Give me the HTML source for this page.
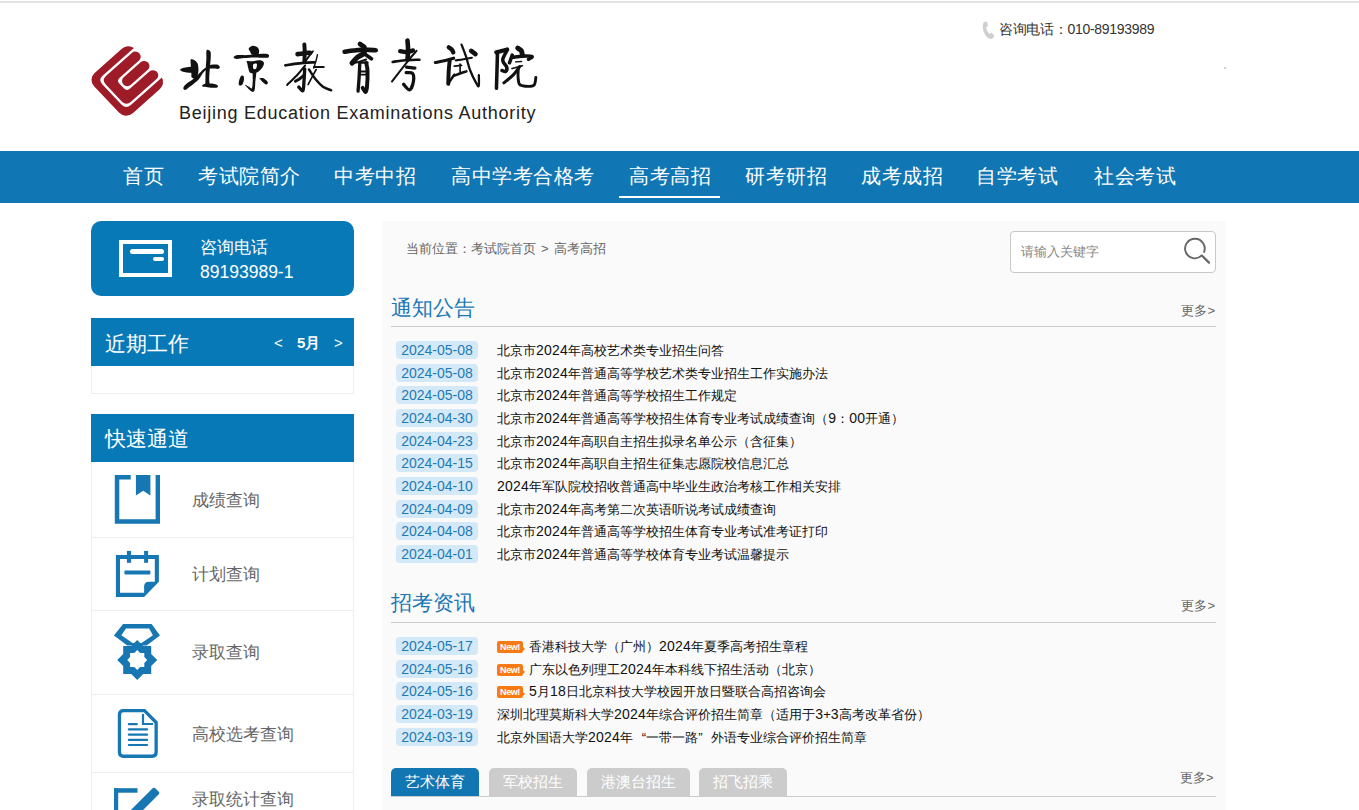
<!DOCTYPE html>
<html><head><meta charset="utf-8">
<style>
*{margin:0;padding:0;box-sizing:border-box}
html,body{width:1359px;height:810px;overflow:hidden;background:#fff}
body{font-family:"Liberation Sans",sans-serif;position:relative;color:#333}
.abs{position:absolute}
#topline{left:0;top:1px;width:1359px;height:2px;background:#e3e3e3}
#logo{left:91px;top:46px;width:72px;height:70px}

#en{left:179px;top:102px;font-size:18px;line-height:22px;color:#222;letter-spacing:0.75px;white-space:nowrap}
#tel{left:982px;top:20px;height:20px;white-space:nowrap}
#tel span{position:absolute;left:17px;top:-1.5px;font-size:14px;line-height:20px;color:#333;letter-spacing:-0.3px}
#dot{left:1224px;top:67px;width:2px;height:2px;background:#cdcdcd}
#nav{left:0;top:151px;width:1359px;height:52px;background:#1177b4}
#nav a{position:absolute;top:-1px;font-size:20px;letter-spacing:0.5px;line-height:52px;color:#fff;text-decoration:none;white-space:nowrap}
#ul{left:619px;top:196px;width:101px;height:2px;background:#fff}
/* left column */
#phone{left:91px;top:221px;width:263px;height:75px;background:#0879b7;border-radius:10px}
#phone .ic{position:absolute;left:28px;top:19px;width:53px;height:37px;border:4px solid #fff}
#phone .b1{position:absolute;left:7px;top:5px;width:34px;height:5px;border-radius:3px;background:#fff}
#phone .b2{position:absolute;left:30px;top:13px;width:11px;height:4px;border-radius:2px;background:#fff}
#phone .t1{position:absolute;left:109px;top:15px;font-size:17px;line-height:24px;color:#fff}
#phone .t2{position:absolute;left:109px;top:39px;font-size:17.5px;line-height:24px;color:#fff}
.lh{position:absolute;left:91px;width:263px;height:48px;background:#0879b7;color:#fff}
.lh .t{position:absolute;left:14px;top:2px;font-size:21px;line-height:48px}
#work{top:318px}
#workbody{left:91px;top:366px;width:263px;height:28px;border:1px solid #eee;border-top:none;background:#fff}
#work .m{position:absolute;top:1px;line-height:48px;font-size:15px;font-weight:bold}
#quick{top:414px}
.qi{position:absolute;left:91px;width:263px;border:1px solid #eee;border-top:none;background:#fff}
.qi .t{position:absolute;left:100px;font-size:17px;color:#666;line-height:24px;white-space:nowrap}
.qi svg{position:absolute}
/* main */
#main{left:382px;top:221px;width:844px;height:589px;background:#fafafa}
#crumb{left:406px;top:240px;font-size:13px;line-height:18px;color:#666;white-space:nowrap}
#search{left:1010px;top:231px;width:206px;height:42px;border:1px solid #c8c8c8;border-radius:4px;background:#fff}
#search span{position:absolute;left:10px;top:11px;font-size:13px;line-height:18px;color:#888}
.sec{position:absolute;left:391px;width:825px;border-bottom:1px solid #ccc}
.sec .h{position:absolute;left:0;margin-top:1px;font-size:21px;line-height:28px;color:#1a78b6;white-space:nowrap}
.sec .more{position:absolute;right:1px;margin-top:1.5px;font-size:13px;line-height:18px;color:#666;white-space:nowrap}
.list{position:absolute;left:396px;width:820px}
.row{position:relative;height:22.67px;white-space:nowrap}
.row .d{position:absolute;left:0;top:2px;width:82px;height:18px;border-radius:4px;background:#d4e9f7;color:#1e7ab5;font-size:14px;line-height:18px;text-align:center}
.row .tt{position:absolute;left:101px;top:0px;font-size:13px;line-height:22px;color:#111}
.n{font-style:normal;font-size:14px;letter-spacing:0.25px}
.ql,.qr{font-style:normal;display:inline-block;width:13px}.ql{text-align:right}
.new{display:inline-block;position:relative;width:26px;height:12px;background:#f77a14;border-radius:2px;color:#fff;font-size:9px;font-weight:bold;line-height:12px;text-align:center;vertical-align:middle;margin-right:6px;margin-top:-1px;top:0;letter-spacing:-0.4px}
.new:after{content:"";position:absolute;right:-2px;top:6px;border-left:2px solid #f77a14;border-top:2px solid transparent;border-bottom:2px solid transparent}
.tab{position:absolute;top:768px;height:28px;border-radius:5px 5px 0 0;background:#ccc;color:#fff;font-size:15px;line-height:28px;padding:0 14px;white-space:nowrap}
#tabline{left:391px;top:796px;width:825px;height:1px;background:#ccc}
</style></head>
<body>
<div id="topline" class="abs"></div>

<svg id="logo" class="abs" viewBox="0 0 72 70" style="overflow:visible">
  <g transform="translate(36.3,35) scale(1.085,1.05) rotate(-42.5)" fill="#9e1b28">
    <path d="M17 -26 A9 9 0 0 1 25.75 -19.1 H-13.1 Q-19.1 -19.1 -19.1 -13.1 V13.1 Q-19.1 19.1 -13.1 19.1 H25.75 A9 9 0 0 1 17 26 H-17 A9 9 0 0 1 -26 17 V-17 A9 9 0 0 1 -17 -26 Z"/>
    <path d="M21.1 -16.9 A4.9 4.9 0 0 1 21.1 -7.1 H-3 Q-7.1 -7.1 -7.1 -3 V3 Q-7.1 7.1 -3 7.1 H21.1 A4.9 4.9 0 0 1 21.1 16.9 H-10.9 Q-16.9 16.9 -16.9 10.9 V-10.9 Q-16.9 -16.9 -10.9 -16.9 Z"/>
    <rect x="-4.9" y="-4.9" width="30.9" height="9.8" rx="4.9"/>
  </g>
</svg>
<svg class="abs" style="left:0;top:0" width="600" height="130" viewBox="0 0 600 130" fill="#111">
<path fill-rule="evenodd" d="M180.10 69.81 C180.21 69.25 181.52 68.52 182.85 68.05 C184.18 67.58 186.56 67.22 188.09 67.00 C189.62 66.78 190.60 66.85 192.02 66.74 C193.43 66.63 195.62 65.89 196.60 66.35 C197.58 66.80 197.91 68.44 197.91 69.49 C197.91 70.53 197.69 72.08 196.60 72.63 C195.51 73.17 193.00 72.79 191.36 72.76 C189.73 72.73 188.31 72.65 186.78 72.43 C185.25 72.21 183.31 71.89 182.20 71.45 C181.09 71.01 180.00 70.38 180.10 69.81 Z"/>
<path fill-rule="evenodd" d="M190.58 60.00 C190.82 59.26 191.36 59.04 192.15 59.15 C192.93 59.26 194.38 59.91 195.29 60.65 C196.19 61.39 197.05 62.34 197.58 63.60 C198.10 64.85 198.32 66.65 198.43 68.18 C198.54 69.71 198.48 71.34 198.23 72.76 C197.98 74.18 197.52 75.70 196.92 76.69 C196.32 77.67 195.51 78.54 194.63 78.65 C193.76 78.76 192.23 78.21 191.69 77.34 C191.14 76.47 191.47 74.94 191.36 73.41 C191.25 71.89 191.14 69.81 191.03 68.18 C190.92 66.54 190.78 64.96 190.71 63.60 C190.63 62.23 190.34 60.74 190.58 60.00 Z"/>
<path fill-rule="evenodd" d="M183.51 87.16 C183.89 86.23 184.71 85.08 186.13 83.88 C187.54 82.68 190.05 81.49 192.02 79.96 C193.98 78.43 196.05 76.47 197.91 74.72 C199.76 72.98 201.72 70.69 203.14 69.49 C204.56 68.29 205.76 67.63 206.41 67.52 C207.07 67.41 207.61 67.96 207.07 68.83 C206.52 69.71 204.45 71.12 203.14 72.76 C201.83 74.40 200.63 76.96 199.21 78.65 C197.80 80.34 196.38 81.43 194.63 82.90 C192.89 84.38 190.22 86.34 188.74 87.48 C187.27 88.63 186.62 89.45 185.80 89.77 C184.98 90.10 184.22 89.88 183.84 89.45 C183.45 89.01 183.13 88.08 183.51 87.16 Z"/>
<path fill-rule="evenodd" d="M207.07 49.85 C207.53 49.47 208.43 49.74 209.03 50.18 C209.63 50.62 210.39 51.00 210.67 52.47 C210.94 53.94 210.81 56.40 210.67 59.02 C210.53 61.63 210.07 64.91 209.82 68.18 C209.57 71.45 209.24 75.92 209.16 78.65 C209.09 81.38 209.93 83.45 209.36 84.54 C208.79 85.63 206.41 86.18 205.76 85.19 C205.10 84.21 205.43 81.49 205.43 78.65 C205.43 75.81 205.60 71.56 205.76 68.18 C205.92 64.80 206.33 60.98 206.41 58.36 C206.50 55.74 206.17 53.89 206.28 52.47 C206.39 51.05 206.61 50.24 207.07 49.85 Z"/>
<path fill-rule="evenodd" d="M209.03 65.56 C209.90 64.96 212.74 64.69 214.27 64.58 C215.79 64.47 217.27 64.47 218.19 64.91 C219.12 65.34 219.83 66.54 219.83 67.20 C219.83 67.85 219.34 68.61 218.19 68.83 C217.05 69.05 214.49 68.61 212.96 68.51 C211.43 68.40 209.69 68.67 209.03 68.18 C208.38 67.69 208.16 66.16 209.03 65.56 Z"/>
<path fill-rule="evenodd" d="M203.14 84.54 C204.01 84.05 205.87 83.67 207.72 83.56 C209.58 83.45 212.63 83.61 214.27 83.88 C215.90 84.16 216.99 84.65 217.54 85.19 C218.08 85.74 218.08 86.72 217.54 87.16 C216.99 87.59 215.90 87.81 214.27 87.81 C212.63 87.81 209.69 87.38 207.72 87.16 C205.76 86.94 203.25 86.94 202.49 86.50 C201.72 86.07 202.27 85.03 203.14 84.54 Z"/>
<path fill-rule="evenodd" d="M248.94 47.89 C249.49 47.24 251.01 46.14 252.21 45.93 C253.41 45.71 255.05 46.04 256.14 46.58 C257.23 47.13 258.32 48.00 258.76 49.20 C259.20 50.40 259.30 52.80 258.76 53.78 C258.21 54.76 256.69 54.98 255.49 55.09 C254.29 55.20 252.43 54.98 251.56 54.43 C250.69 53.89 250.69 52.58 250.25 51.82 C249.82 51.05 249.16 50.51 248.94 49.85 C248.72 49.20 248.40 48.54 248.94 47.89 Z"/>
<path fill-rule="evenodd" d="M233.89 56.73 C234.49 56.18 235.53 55.36 237.82 55.09 C240.11 54.82 244.36 55.25 247.63 55.09 C250.91 54.93 254.40 54.33 257.45 54.11 C260.50 53.89 264.05 53.62 265.96 53.78 C267.87 53.94 268.52 54.49 268.90 55.09 C269.28 55.69 268.96 56.94 268.25 57.38 C267.54 57.82 266.99 57.71 264.65 57.71 C262.30 57.71 257.56 57.33 254.18 57.38 C250.80 57.43 247.20 57.76 244.36 58.03 C241.53 58.31 238.85 58.96 237.16 59.02 C235.47 59.07 234.76 58.74 234.22 58.36 C233.67 57.98 233.29 57.27 233.89 56.73 Z"/>
<path fill-rule="evenodd" d="M246.98 60.98 C247.91 60.60 250.80 61.42 252.87 61.31 C254.94 61.20 257.67 60.27 259.41 60.32 C261.16 60.38 262.63 60.87 263.34 61.63 C264.05 62.40 264.10 63.60 263.67 64.91 C263.23 66.21 261.98 68.18 260.72 69.49 C259.47 70.80 257.89 72.21 256.14 72.76 C254.40 73.30 251.56 73.52 250.25 72.76 C248.94 72.00 248.78 69.71 248.29 68.18 C247.80 66.65 247.52 64.80 247.31 63.60 C247.09 62.40 246.05 61.36 246.98 60.98 Z M253.52 68.83 C254.01 69.49 255.60 69.32 256.14 68.51 C256.69 67.69 257.29 64.58 256.80 63.92 C256.30 63.27 253.74 63.76 253.20 64.58 C252.65 65.40 253.03 68.18 253.52 68.83 Z"/>
<path fill-rule="evenodd" d="M252.87 71.45 C253.44 69.92 255.73 70.47 256.14 72.10 C256.56 73.74 255.60 78.32 255.36 81.27 C255.12 84.21 255.12 88.01 254.70 89.77 C254.29 91.54 253.61 91.76 252.87 91.87 C252.13 91.98 251.23 91.21 250.25 90.43 C249.27 89.64 247.83 88.08 246.98 87.16 C246.13 86.23 244.82 84.92 245.15 84.87 C245.47 84.81 247.82 86.28 248.94 86.83 C250.07 87.38 251.25 89.07 251.89 88.14 C252.52 87.21 252.57 84.05 252.74 81.27 C252.90 78.49 252.30 72.98 252.87 71.45 Z"/>
<path fill-rule="evenodd" d="M241.09 76.03 C241.80 75.27 242.89 75.49 243.38 76.03 C243.87 76.58 244.14 77.99 244.03 79.30 C243.92 80.61 243.33 82.85 242.73 83.88 C242.13 84.92 241.09 85.41 240.43 85.52 C239.78 85.63 239.02 85.36 238.80 84.54 C238.58 83.72 238.74 82.03 239.13 80.61 C239.51 79.19 240.38 76.79 241.09 76.03 Z"/>
<path fill-rule="evenodd" d="M259.41 78.32 C259.74 77.99 261.60 77.72 262.69 77.99 C263.78 78.27 265.09 79.19 265.96 79.96 C266.83 80.72 267.81 81.81 267.92 82.58 C268.03 83.34 267.27 84.43 266.61 84.54 C265.96 84.65 264.98 83.99 263.99 83.23 C263.01 82.47 261.49 80.78 260.72 79.96 C259.96 79.14 259.09 78.65 259.41 78.32 Z"/>
<path fill="none" stroke="#111" stroke-width="3.95" stroke-linecap="round" stroke-linejoin="round" d="M304.36 44.45 C304.41 45.76 304.71 49.46 304.71 52.33 C304.71 55.19 304.41 60.09 304.36 61.64"/>
<path fill="none" stroke="#111" stroke-width="4.57" stroke-linecap="round" stroke-linejoin="round" d="M297.55 54.12 C298.45 54.00 300.83 53.64 302.92 53.40 C305.01 53.16 308.89 52.80 310.09 52.68"/>
<path fill="none" stroke="#111" stroke-width="1.87" stroke-linecap="round" stroke-linejoin="round" d="M312.95 51.25 C312.23 52.15 309.97 54.83 308.65 56.62 C307.34 58.42 305.67 61.10 305.07 62.00"/>
<path fill="none" stroke="#111" stroke-width="2.70" stroke-linecap="round" stroke-linejoin="round" d="M285.37 65.36 C286.86 65.13 291.28 64.35 294.33 63.93 C297.37 63.51 300.30 63.12 303.64 62.86 C306.98 62.59 312.59 62.44 314.38 62.36"/>
<path fill="none" stroke="#111" stroke-width="2.08" stroke-linecap="round" stroke-linejoin="round" d="M305.07 65.58 C303.88 67.01 300.89 70.95 297.91 74.17 C294.92 77.40 288.95 83.13 287.16 84.92"/>
<path fill="none" stroke="#111" stroke-width="2.91" stroke-linecap="round" stroke-linejoin="round" d="M295.40 81.34 C296.18 80.86 298.62 79.49 300.06 78.47 C301.49 77.46 303.34 75.79 304.00 75.25"/>
<path fill="none" stroke="#111" stroke-width="3.32" stroke-linecap="round" stroke-linejoin="round" d="M304.71 68.80 C304.59 70.83 304.30 77.34 304.00 80.98 C303.70 84.62 303.79 89.64 302.92 90.65 C302.05 91.67 299.46 87.67 298.77 87.07"/>
<path fill="none" stroke="#111" stroke-width="1.45" stroke-linecap="round" stroke-linejoin="round" d="M317.39 54.83 C317.13 55.97 316.44 59.43 315.82 61.64 C315.20 63.85 314.03 67.01 313.67 68.09"/>
<path fill="none" stroke="#111" stroke-width="2.08" stroke-linecap="round" stroke-linejoin="round" d="M314.03 67.01 L323.70 67.01"/>
<path fill="none" stroke="#111" stroke-width="1.66" stroke-linecap="round" stroke-linejoin="round" d="M316.17 69.52 C315.40 70.95 312.87 75.61 311.52 78.11 C310.17 80.62 308.65 83.49 308.08 84.56"/>
<path fill="none" stroke="#111" stroke-width="2.49" stroke-linecap="round" stroke-linejoin="round" d="M309.01 69.52 C310.15 71.19 313.49 76.68 315.82 79.55 C318.14 82.41 320.41 84.92 322.98 86.71 C325.55 88.50 329.84 89.70 331.22 90.29"/>
<path fill="none" stroke="#111" stroke-width="4.78" stroke-linecap="round" stroke-linejoin="round" d="M360.00 44.09 L364.30 46.95"/>
<path fill="none" stroke="#111" stroke-width="4.57" stroke-linecap="round" stroke-linejoin="round" d="M344.60 51.75 C346.15 51.55 350.57 50.89 353.91 50.54 C357.25 50.18 361.01 49.64 364.65 49.60 C368.29 49.57 373.91 50.20 375.76 50.32"/>
<path fill="none" stroke="#111" stroke-width="5.19" stroke-linecap="round" stroke-linejoin="round" d="M364.30 53.40 C363.16 54.06 359.52 55.73 357.49 57.34 C355.46 58.95 353.01 62.12 352.12 63.07"/>
<path fill="none" stroke="#111" stroke-width="2.08" stroke-linecap="round" stroke-linejoin="round" d="M352.12 63.43 C353.37 63.13 357.31 62.30 359.64 61.64 C361.97 60.98 365.01 59.85 366.09 59.49"/>
<path fill="none" stroke="#111" stroke-width="3.74" stroke-linecap="round" stroke-linejoin="round" d="M366.44 55.19 L371.46 58.77"/>
<path fill="none" stroke="#111" stroke-width="3.32" stroke-linecap="round" stroke-linejoin="round" d="M359.78 63.43 C359.66 65.88 359.35 73.52 359.07 78.11 C358.78 82.71 358.23 88.86 358.06 91.01"/>
<path fill="none" stroke="#111" stroke-width="3.95" stroke-linecap="round" stroke-linejoin="round" d="M366.23 63.07 C366.44 64.38 367.40 66.89 367.52 70.95 C367.64 75.01 367.28 83.90 366.95 87.43 C366.61 90.95 366.23 92.02 365.51 92.08 C364.80 92.14 363.13 88.50 362.65 87.79"/>
<path fill="none" stroke="#111" stroke-width="2.29" stroke-linecap="round" stroke-linejoin="round" d="M359.78 62.71 L367.52 62.71"/>
<path fill="none" stroke="#111" stroke-width="1.87" stroke-linecap="round" stroke-linejoin="round" d="M360.00 71.52 L366.44 71.52"/>
<path fill="none" stroke="#111" stroke-width="1.87" stroke-linecap="round" stroke-linejoin="round" d="M360.00 74.68 L366.09 74.68"/>
<path fill="none" stroke="#111" stroke-width="4.59" stroke-linecap="round" stroke-linejoin="round" d="M407.49 40.65 C407.59 42.22 408.10 46.86 408.10 50.06 C408.10 53.26 407.59 58.22 407.49 59.85"/>
<path fill="none" stroke="#111" stroke-width="4.37" stroke-linecap="round" stroke-linejoin="round" d="M400.19 51.19 C401.26 51.32 404.46 52.07 406.59 51.94 C408.72 51.82 411.92 50.69 412.99 50.44"/>
<path fill="none" stroke="#111" stroke-width="2.62" stroke-linecap="round" stroke-linejoin="round" d="M392.66 61.96 C394.35 61.71 398.37 60.83 402.83 60.45 C407.28 60.08 416.63 59.82 419.39 59.70"/>
<path fill="none" stroke="#111" stroke-width="1.97" stroke-linecap="round" stroke-linejoin="round" d="M416.53 50.81 C415.25 52.32 412.95 54.73 408.85 59.85 C404.75 64.97 394.73 77.92 391.91 81.54"/>
<path fill="none" stroke="#111" stroke-width="3.28" stroke-linecap="round" stroke-linejoin="round" d="M406.59 67.23 L414.87 68.13"/>
<path fill="none" stroke="#111" stroke-width="3.28" stroke-linecap="round" stroke-linejoin="round" d="M406.21 72.65 C407.28 72.78 411.42 71.90 412.61 73.40 C413.81 74.91 413.87 78.95 413.37 81.69 C412.87 84.42 411.23 89.38 409.60 89.82 C407.97 90.26 404.58 85.24 403.58 84.32"/>
<path fill="none" stroke="#111" stroke-width="4.36" stroke-linecap="round" stroke-linejoin="round" d="M448.77 47.31 C449.28 47.73 451.10 48.98 451.85 49.82 C452.60 50.66 453.04 51.91 453.28 52.33"/>
<path fill="none" stroke="#111" stroke-width="3.12" stroke-linecap="round" stroke-linejoin="round" d="M435.37 62.50 C436.86 62.21 441.28 61.50 444.33 60.78 C447.37 60.06 452.09 58.63 453.64 58.20"/>
<path fill="none" stroke="#111" stroke-width="3.95" stroke-linecap="round" stroke-linejoin="round" d="M449.70 60.21 C449.54 61.88 449.01 66.30 448.77 70.23 C448.53 74.17 448.35 81.58 448.27 83.85"/>
<path fill="none" stroke="#111" stroke-width="2.49" stroke-linecap="round" stroke-linejoin="round" d="M448.48 83.49 C448.98 82.71 450.51 80.30 451.49 78.83 C452.47 77.36 453.88 75.37 454.36 74.68"/>
<path fill="none" stroke="#111" stroke-width="2.08" stroke-linecap="round" stroke-linejoin="round" d="M455.79 60.35 C457.10 60.16 460.98 59.63 463.67 59.20 C466.35 58.77 470.53 58.01 471.91 57.77"/>
<path fill="none" stroke="#111" stroke-width="1.87" stroke-linecap="round" stroke-linejoin="round" d="M454.36 66.08 L461.52 65.36"/>
<path fill="none" stroke="#111" stroke-width="1.66" stroke-linecap="round" stroke-linejoin="round" d="M460.09 64.15 L460.09 73.10"/>
<path fill="none" stroke="#111" stroke-width="2.49" stroke-linecap="round" stroke-linejoin="round" d="M453.78 75.82 C454.95 75.39 458.70 73.98 460.80 73.24 C462.90 72.50 465.46 71.69 466.39 71.38"/>
<path fill="none" stroke="#111" stroke-width="2.29" stroke-linecap="round" stroke-linejoin="round" d="M461.52 44.59 C462.23 46.48 464.38 51.63 465.82 55.91 C467.25 60.18 468.44 65.82 470.11 70.23 C471.79 74.65 474.41 79.79 475.85 82.41 C477.28 85.04 478.21 87.19 478.71 85.99 C479.21 84.80 478.83 77.04 478.85 75.25"/>
<path fill="none" stroke="#111" stroke-width="4.57" stroke-linecap="round" stroke-linejoin="round" d="M471.19 50.89 L475.49 54.12"/>
<path fill="none" stroke="#111" stroke-width="3.53" stroke-linecap="round" stroke-linejoin="round" d="M497.46 52.89 C497.38 55.52 497.19 62.74 497.03 68.65 C496.86 74.56 496.55 85.07 496.45 88.35"/>
<path fill="none" stroke="#111" stroke-width="4.15" stroke-linecap="round" stroke-linejoin="round" d="M496.24 52.32 C497.25 52.06 500.50 51.22 502.33 50.74 C504.15 50.27 506.39 49.67 507.20 49.46"/>
<path fill="none" stroke="#111" stroke-width="3.53" stroke-linecap="round" stroke-linejoin="round" d="M507.20 50.03 C506.45 51.70 502.76 57.19 502.68 60.06 C502.61 62.92 506.29 65.31 506.77 67.22 C507.25 69.13 506.35 70.98 505.55 71.52 C504.75 72.06 502.57 70.62 501.97 70.44"/>
<path fill="none" stroke="#111" stroke-width="3.53" stroke-linecap="round" stroke-linejoin="round" d="M512.21 55.19 L509.49 62.78"/>
<path fill="none" stroke="#111" stroke-width="4.99" stroke-linecap="round" stroke-linejoin="round" d="M517.73 48.02 C518.32 48.48 520.56 49.72 521.31 50.74 C522.06 51.77 522.09 53.61 522.24 54.18"/>
<path fill="none" stroke="#111" stroke-width="3.53" stroke-linecap="round" stroke-linejoin="round" d="M513.43 57.34 C514.92 57.14 519.28 56.31 522.38 56.19 C525.49 56.07 531.04 56.12 532.05 56.62 C533.07 57.12 529.07 58.77 528.47 59.20"/>
<path fill="none" stroke="#111" stroke-width="1.45" stroke-linecap="round" stroke-linejoin="round" d="M515.58 61.85 L521.52 61.49"/>
<path fill="none" stroke="#111" stroke-width="1.66" stroke-linecap="round" stroke-linejoin="round" d="M512.00 68.51 C512.77 68.30 514.92 67.67 516.65 67.22 C518.38 66.77 521.43 66.03 522.38 65.79"/>
<path fill="none" stroke="#111" stroke-width="3.12" stroke-linecap="round" stroke-linejoin="round" d="M519.66 66.65 C518.56 68.06 515.70 72.40 513.07 75.10 C510.45 77.80 505.43 81.55 503.90 82.84"/>
<path fill="none" stroke="#111" stroke-width="2.91" stroke-linecap="round" stroke-linejoin="round" d="M518.23 68.80 C518.21 70.21 517.87 74.65 518.09 77.25 C518.30 79.85 518.32 82.92 519.52 84.41 C520.71 85.90 522.86 86.06 525.25 86.20 C527.64 86.35 532.08 86.74 533.85 85.27 C535.61 83.80 535.52 78.71 535.85 77.39"/>
</svg>
<div id="en" class="abs">Beijing Education Examinations Authority</div>

<div id="tel" class="abs">
  <svg class="abs" style="left:0;top:1px" width="13" height="19" viewBox="0 0 13 19"><path d="M2 1 L5 0.5 L6 5 L4 6.5 Q4.5 10 7.5 13 L9.5 11.5 L12.5 15 L10 18 Q6 18 3 13.5 Q0 8.5 1 3 Z" fill="#cfcfcf"/></svg>
  <span>咨询电话：010-89193989</span>
</div>
<div id="dot" class="abs"></div>

<div id="nav" class="abs">
  <a style="left:123px">首页</a>
  <a style="left:198px">考试院简介</a>
  <a style="left:334px">中考中招</a>
  <a style="left:451px">高中学考合格考</a>
  <a style="left:629px">高考高招</a>
  <a style="left:745px">研考研招</a>
  <a style="left:861px">成考成招</a>
  <a style="left:976px">自学考试</a>
  <a style="left:1094px">社会考试</a>
</div>
<div id="ul" class="abs"></div>

<!-- LEFT -->
<div id="phone" class="abs">
  <div class="ic"><div class="b1"></div><div class="b2"></div></div>
  <div class="t1">咨询电话</div>
  <div class="t2">89193989-1</div>
</div>

<div id="work" class="lh"><div class="t">近期工作</div>
  <div class="m" style="left:183px;font-weight:normal">&lt;</div>
  <div class="m" style="left:206px">5月</div>
  <div class="m" style="left:243px;font-weight:normal">&gt;</div>
</div>
<div id="workbody" class="abs"></div>

<div id="quick" class="lh"><div class="t" style="top:1px">快速通道</div></div>

<div class="qi" style="top:462px;height:76px">
  <svg style="left:18px;top:8px" width="56" height="60" viewBox="0 0 56 60" fill="#1677b3">
    <path d="M4.8 5 H20.7 V9.6 H9.3 V49.2 H45.6 V5 H50 V53.7 H4.8 Z"/>
    <path d="M25.9 5 H40.4 V25.6 L33.15 20.7 L25.9 25.6 Z"/>
  </svg>
  <div class="t" style="top:27px">成绩查询</div>
</div>
<div class="qi" style="top:538px;height:73px">
  <svg style="left:18px;top:7px" width="56" height="60" viewBox="0 0 56 60" fill="#1677b3">
    <path fill-rule="evenodd" d="M5.9 10 H48.9 V36.7 L34.1 51.9 H5.9 Z M10 14.1 V47.8 H34.1 V41.5 Q34.1 36.7 39 36.7 H44.8 V14.1 Z"/>
    <rect x="16.9" y="5.9" width="4.2" height="11.9"/>
    <rect x="34.1" y="5.9" width="4" height="11.9"/>
    <rect x="14.4" y="25.6" width="26" height="4" rx="1"/>
  </svg>
  <div class="t" style="top:25px">计划查询</div>
</div>
<div class="qi" style="top:611px;height:84px">
  <svg style="left:16px;top:7px" width="58" height="68" viewBox="0 0 58 68" fill="#1677b3">
    <path fill-rule="evenodd" d="M15.1 6 H43.6 L52 17.6 L38.6 27.5 H19.3 L5.9 17.6 Z M18 10.5 L13.4 17.2 L24.5 25 H33.5 L44.9 17.2 L41.1 10.5 Z"/>
    <path fill-rule="evenodd" d="M29.20 22.00 L35.20 28.00 L43.20 28.00 L43.20 36.00 L49.20 42.00 L43.20 48.00 L43.20 56.00 L35.20 56.00 L29.20 62.00 L23.20 56.00 L15.20 56.00 L15.20 48.00 L9.20 42.00 L15.20 36.00 L15.20 28.00 L23.20 28.00 Z M29.20 32.00 L32.10 34.90 L36.30 34.90 L36.30 39.10 L39.20 42.00 L36.30 44.90 L36.30 49.10 L32.10 49.10 L29.20 52.00 L26.30 49.10 L22.10 49.10 L22.10 44.90 L19.20 42.00 L22.10 39.10 L22.10 34.90 L26.30 34.90 Z"/>
  </svg>
  <div class="t" style="top:30px">录取查询</div>
</div>
<div class="qi" style="top:695px;height:78px">
  <svg style="left:18px;top:7px" width="56" height="60" viewBox="0 0 56 60" fill="#1677b3">
    <path d="M13.45 8.65 H34.5 L46.15 20.5 V50.25 Q46.15 54.25 42.15 54.25 H13.45 Q9.45 54.25 9.45 50.25 V12.65 Q9.45 8.65 13.45 8.65 Z" fill="none" stroke="#1677b3" stroke-width="3.3"/>
    <path d="M33 11.9 V22 H43" fill="none" stroke="#1677b3" stroke-width="2.2"/>
    <rect x="17.8" y="21.1" width="10" height="2.2" rx="1"/>
    <rect x="17.8" y="26.3" width="20.3" height="2.2" rx="1"/>
    <rect x="17.8" y="31.5" width="20.3" height="2.2" rx="1"/>
    <rect x="17.8" y="36.7" width="20.3" height="2.2" rx="1"/>
    <rect x="17.8" y="41.9" width="20.3" height="2.2" rx="1"/>
  </svg>
  <div class="t" style="top:28px">高校选考查询</div>
</div>
<div class="qi" style="top:773px;height:60px">
  <svg style="left:16px;top:5px" width="60" height="60" viewBox="0 0 60 60" fill="#1677b3">
    <rect x="6" y="10.2" width="4.2" height="50"/>
    <rect x="6" y="10.2" width="23.5" height="4.5"/>
    <rect x="-5" y="-4.3" width="50" height="8.6" rx="2.2" transform="translate(45.5,15.5) rotate(135)"/>
  </svg>
  <div class="t" style="top:15px">录取统计查询</div>
</div>

<!-- MAIN -->
<div id="main" class="abs"></div>
<div id="crumb" class="abs">当前位置：考试院首页<span style="margin:0 1.5px"> &gt; </span>高考高招</div>
<div id="search" class="abs"><span>请输入关键字</span>
  <svg class="abs" style="left:172px;top:5px" width="30" height="30" viewBox="0 0 30 30">
    <path d="M18.83 18.43 A9.8 9.8 0 1 1 20.8 15.59" fill="none" stroke="#666" stroke-width="1.9"/>
    <path d="M18.83 18.43 L26 25.6" stroke="#666" stroke-width="2.2" stroke-linecap="round"/>
  </svg>
</div>

<div class="sec" style="top:290px;height:37px">
  <div class="h" style="top:3px">通知公告</div>
  <div class="more" style="top:10px">更多&gt;</div>
</div>
<div class="list" style="top:339px">
  <div class="row"><div class="d">2024-05-08</div><div class="tt">北京市<i class="n">2024</i>年高校艺术类专业招生问答</div></div>
  <div class="row"><div class="d">2024-05-08</div><div class="tt">北京市<i class="n">2024</i>年普通高等学校艺术类专业招生工作实施办法</div></div>
  <div class="row"><div class="d">2024-05-08</div><div class="tt">北京市<i class="n">2024</i>年普通高等学校招生工作规定</div></div>
  <div class="row"><div class="d">2024-04-30</div><div class="tt">北京市<i class="n">2024</i>年普通高等学校招生体育专业考试成绩查询（<i class="n">9</i>：<i class="n">00</i>开通）</div></div>
  <div class="row"><div class="d">2024-04-23</div><div class="tt">北京市<i class="n">2024</i>年高职自主招生拟录名单公示（含征集）</div></div>
  <div class="row"><div class="d">2024-04-15</div><div class="tt">北京市<i class="n">2024</i>年高职自主招生征集志愿院校信息汇总</div></div>
  <div class="row"><div class="d">2024-04-10</div><div class="tt"><i class="n">2024</i>年军队院校招收普通高中毕业生政治考核工作相关安排</div></div>
  <div class="row"><div class="d">2024-04-09</div><div class="tt">北京市<i class="n">2024</i>年高考第二次英语听说考试成绩查询</div></div>
  <div class="row"><div class="d">2024-04-08</div><div class="tt">北京市<i class="n">2024</i>年普通高等学校招生体育专业考试准考证打印</div></div>
  <div class="row"><div class="d">2024-04-01</div><div class="tt">北京市<i class="n">2024</i>年普通高等学校体育专业考试温馨提示</div></div>
</div>

<div class="sec" style="top:585px;height:38px">
  <div class="h" style="top:3px">招考资讯</div>
  <div class="more" style="top:10px">更多&gt;</div>
</div>
<div class="list" style="top:635px">
  <div class="row"><div class="d">2024-05-17</div><div class="tt"><span class="new">New!</span>香港科技大学（广州）<i class="n">2024</i>年夏季高考招生章程</div></div>
  <div class="row"><div class="d">2024-05-16</div><div class="tt"><span class="new">New!</span>广东以色列理工<i class="n">2024</i>年本科线下招生活动（北京）</div></div>
  <div class="row"><div class="d">2024-05-16</div><div class="tt"><span class="new">New!</span><i class="n">5</i>月<i class="n">18</i>日北京科技大学校园开放日暨联合高招咨询会</div></div>
  <div class="row"><div class="d">2024-03-19</div><div class="tt">深圳北理莫斯科大学<i class="n">2024</i>年综合评价招生简章（适用于<i class="n">3</i>+<i class="n">3</i>高考改革省份）</div></div>
  <div class="row"><div class="d">2024-03-19</div><div class="tt">北京外国语大学<i class="n">2024</i>年<i class="ql">“</i>一带一路<i class="qr">”</i>外语专业综合评价招生简章</div></div>
</div>

<div class="tab" style="left:391px;background:#1276b3">艺术体育</div>
<div class="tab" style="left:489px">军校招生</div>
<div class="tab" style="left:587px">港澳台招生</div>
<div class="tab" style="left:699px">招飞招乘</div>
<div class="more abs" style="left:1180px;top:769px;font-size:13px;line-height:18px;color:#666">更多&gt;</div>
<div id="tabline" class="abs"></div>
</body></html>
